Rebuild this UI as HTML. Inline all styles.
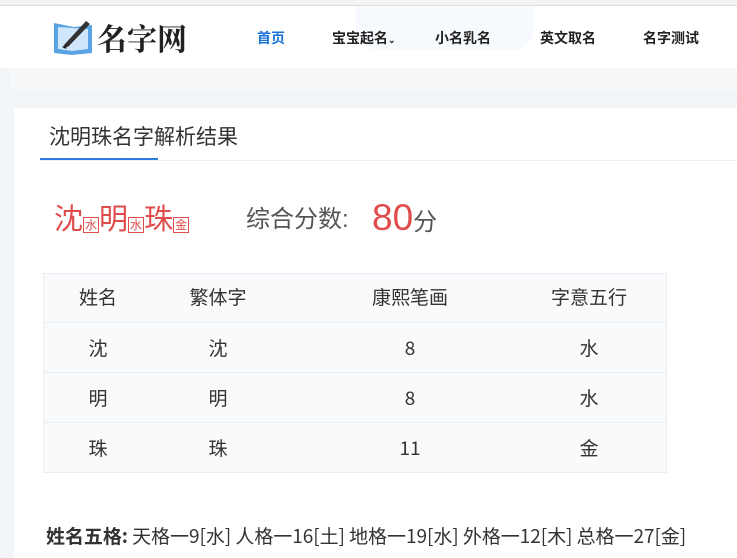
<!DOCTYPE html>
<html><head><meta charset="utf-8"><style>
*{margin:0;padding:0;box-sizing:border-box}
body{width:737px;height:558px;overflow:hidden;background:#f3f6f9;font-family:"Liberation Sans","Noto Sans CJK SC",sans-serif;position:relative;color:#333}
.top{position:absolute;left:0;top:0;width:737px;height:6px;background:#f3f3f3;border-bottom:1px solid #ddd}
.hdr{position:absolute;left:0;top:6px;width:737px;height:62px;background:#fff}
.nav{position:absolute;top:22px;font-size:14px;line-height:20px;font-weight:bold;color:#222}
.band{position:absolute;left:10px;top:70px;width:727px;height:20px;background:#f7f8fa}
.panel{position:absolute;left:14px;top:108px;width:723px;height:450px;background:#fff}
.t{position:absolute;text-align:center;font-size:19px;line-height:26px;color:#333}
.t span{font-family:"Noto Sans CJK SC",sans-serif}
.row{position:absolute;left:43px;width:624px;height:50px;background:#f8fafc;border-bottom:1px solid #eaeef2}
</style></head><body>
<div class="top"></div>
<div class="hdr">
 <div style="position:absolute;left:356px;top:0px;width:178px;height:44px;border-radius:0 0 22px 22px;background:#f6f9fd"></div>
 <svg style="position:absolute;left:52px;top:11px" width="44" height="40" viewBox="0 0 44 40"><path d="M2 6 L2 36 L20 38 L40 36 L40 8 L22 10 Z" fill="#5aa4e6"/><path d="M6 10 L6 32 L20 34 L36 32 L36 12 Z" fill="#cfe6fb"/><path d="M12 28 L34 4 L38 7 L16 30 Z" fill="#333"/><path d="M10 30 L16 26 L14 32 Z" fill="#222"/></svg>
 <div style="position:absolute;left:97px;top:9px;font-size:30px;font-weight:bold;color:#222;font-family:'Noto Serif CJK SC',serif">名字网</div>
 <div class="nav" style="left:257px;color:#1a73d9">首页</div>
 <div class="nav" style="left:332px">宝宝起名<span style="font-size:9px">⌄</span></div>
 <div class="nav" style="left:435px">小名乳名</div>
 <div class="nav" style="left:540px">英文取名</div>
 <div class="nav" style="left:643px">名字测试</div>
</div>
<div class="band"></div>
<div class="panel">
 <div style="position:absolute;left:35px;top:15px;font-size:21px;line-height:30px;color:#333">沈明珠名字解析结果</div>
 <div style="position:absolute;left:26px;top:50px;width:118px;height:2px;background:#2f7be0"></div>
 <div style="position:absolute;left:26px;top:52px;width:697px;height:1px;background:#eee"></div>
 <div style="position:absolute;left:40px;top:92px;color:#e04b4b;font-size:29px;line-height:40px;white-space:nowrap">沈<span style="font-size:12px;line-height:14px;border:1px solid #e04b4b;padding:0 1px">水</span>明<span style="font-size:12px;line-height:14px;border:1px solid #e04b4b;padding:0 1px">水</span>珠<span style="font-size:12px;line-height:14px;border:1px solid #e04b4b;padding:0 1px">金</span></div>
 <div style="position:absolute;left:232px;top:94px;font-size:24px;line-height:36px;color:#555">综合分数:</div>
 <div style="position:absolute;left:358px;top:87px;font-size:37px;line-height:46px;color:#e04b4b">80<span style="font-size:24px;color:#555">分</span></div>
</div>
<div class="row" style="top:273px;border-top:1px solid #eaeef2;border-left:1px solid #eaeef2;border-right:1px solid #eaeef2"></div>
<div class="row" style="top:323px;border-left:1px solid #eaeef2;border-right:1px solid #eaeef2"></div>
<div class="row" style="top:373px;border-left:1px solid #eaeef2;border-right:1px solid #eaeef2"></div>
<div class="row" style="top:423px;border-left:1px solid #eaeef2;border-right:1px solid #eaeef2"></div>
<div class="t" style="left:58px;width:80px;top:286px">姓名</div>
<div class="t" style="left:168px;width:100px;top:286px">繁体字</div>
<div class="t" style="left:350px;width:120px;top:286px">康熙笔画</div>
<div class="t" style="left:529px;width:120px;top:286px">字意五行</div>
<div class="t" style="left:58px;width:80px;top:337px">沈</div><div class="t" style="left:168px;width:100px;top:337px">沈</div><div class="t" style="left:350px;width:120px;top:335px"><span>8</span></div><div class="t" style="left:529px;width:120px;top:337px">水</div>
<div class="t" style="left:58px;width:80px;top:387px">明</div><div class="t" style="left:168px;width:100px;top:387px">明</div><div class="t" style="left:350px;width:120px;top:385px"><span>8</span></div><div class="t" style="left:529px;width:120px;top:387px">水</div>
<div class="t" style="left:58px;width:80px;top:437px">珠</div><div class="t" style="left:168px;width:100px;top:437px">珠</div><div class="t" style="left:350px;width:120px;top:435px"><span>11</span></div><div class="t" style="left:529px;width:120px;top:437px">金</div>
<div style="position:absolute;left:46px;top:521px;font-size:19px;line-height:30px;color:#333;white-space:nowrap;font-family:'Noto Sans CJK SC',sans-serif;letter-spacing:-0.05px"><b>姓名五格:</b> 天格一9[水] 人格一16[土] 地格一19[水] 外格一12[木] 总格一27[金]</div>
</body></html>
